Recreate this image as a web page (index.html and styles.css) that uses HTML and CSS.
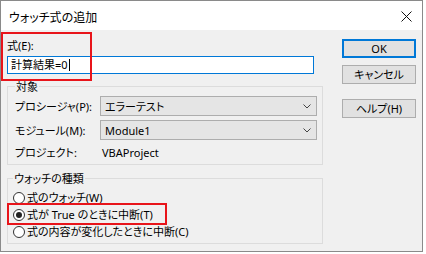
FILE: index.html
```html
<!doctype html>
<html>
<head>
<meta charset="utf-8">
<title>ウォッチ式の追加</title>
<link rel="stylesheet" href="styles.css">
</head>
<body>
<div class="dialog">
	<div class="titlebar">
		<span class="title">ウォッチ式の追加</span>
		<svg class="close" width="11" height="11" viewBox="0 0 11 11"><path d="M0.5 0.5L10.5 10.5M10.5 0.5L0.5 10.5" stroke="#111" stroke-width="1" fill="none"/></svg>
	</div>
	<div class="content">
		<div class="main">
			<div class="label">式(E):</div>
			<div class="input">計算結果=0<span class="caret"></span></div>
			<fieldset class="group target">
				<legend>対象</legend>
				<div class="row">
					<span class="name">プロシージャ(P):</span>
					<div class="select">エラーテスト<svg class="chev" width="8" height="5" viewBox="0 0 8 5"><path d="M0.5 0.5L4 4L7.5 0.5" stroke="#444" fill="none"/></svg></div>
				</div>
				<div class="row">
					<span class="name">モジュール(M):</span>
					<div class="select">Module1<svg class="chev" width="8" height="5" viewBox="0 0 8 5"><path d="M0.5 0.5L4 4L7.5 0.5" stroke="#444" fill="none"/></svg></div>
				</div>
				<div class="row info">
					<span class="name">プロジェクト:</span>
					<span class="value">VBAProject</span>
				</div>
			</fieldset>
			<fieldset class="group kind">
				<legend>ウォッチの種類</legend>
				<div class="radio"><span class="circle"></span>式のウォッチ(W)</div>
				<div class="radio"><span class="circle on"></span>式が True のときに中断(T)</div>
				<div class="radio"><span class="circle"></span>式の内容が変化したときに中断(C)</div>
			</fieldset>
		</div>
		<div class="buttons">
			<div class="btn default">OK</div>
			<div class="btn">キャンセル</div>
			<div class="btn help">ヘルプ(H)</div>
		</div>
	</div>
	<div class="mark mark-expr"></div>
	<div class="mark mark-radio"></div>
</div>
</body>
</html>
```

FILE: styles.css
```css
body {
	margin: 0;
	background: #fff;
	font: 11px/15px "Noto Sans", "Noto Sans CJK JP", sans-serif;
	font-feature-settings: "palt";
	color: #000;
}
.dialog {
	position: relative;
	width: 421px;
	height: 250px;
	border: 1px solid #8a8a8a;
	background: #f0f0f0;
	display: flex;
	flex-direction: column;
}
.titlebar {
	height: 29px;
	background: #fff;
	display: flex;
	align-items: center;
	justify-content: space-between;
	padding: 0 10px 0 8px;
}
.title {
	font-size: 12px;
	margin-top: 3px;
}
.close {
	margin-top: 1px;
}
.content {
	flex: 1;
	display: flex;
	padding: 8px 0 0 6px;
}
.main {
	width: 316px;
}
.label {
	height: 15px;
}
.input {
	margin-top: 3px;
	height: 16px;
	line-height: 16px;
	border: 1px solid #0078d7;
	background: #fff;
	padding-left: 3px;
	width: 302px;
	display: flex;
	align-items: center;
}
.caret {
	display: inline-block;
	width: 1px;
	height: 12px;
	background: #000;
	margin-left: 1px;
}
.group {
	margin: 0;
	border: 1px solid #dcdcdc;
	padding: 0 0 0 7px;
	min-width: 0;
}
.group legend {
	padding: 0 1px;
	line-height: 15px;
}
.target {
	margin-top: 5px;
	padding-top: 2px;
	padding-bottom: 4px;
}
.row {
	display: flex;
	align-items: center;
	height: 20px;
	margin-bottom: 4px;
}
.row.info {
	height: 16px;
	margin-bottom: 0;
}
.name {
	width: 85px;
}
.value {
	padding-left: 2px;
}
.select {
	width: 206px;
	height: 18px;
	border: 1px solid #adadad;
	background: #e5e5e5;
	padding-left: 4px;
	display: flex;
	align-items: center;
	justify-content: space-between;
	padding-right: 5px;
}
.kind {
	margin-top: 6px;
	padding-top: 3px;
	padding-bottom: 3px;
	padding-left: 5px;
}
.radio {
	height: 17px;
	display: flex;
	align-items: center;
}
.circle {
	width: 10px;
	height: 10px;
	border: 1px solid #333;
	border-radius: 50%;
	background: #fff;
	margin-right: 2px;
	display: flex;
	align-items: center;
	justify-content: center;
}
.circle.on::after {
	content: "";
	width: 6px;
	height: 6px;
	border-radius: 50%;
	background: #222;
}
.buttons {
	margin-left: 19px;
	padding-top: 1px;
	width: 74px;
}
.btn {
	height: 17px;
	line-height: 17px;
	border: 1px solid #adadad;
	background: #e1e1e1;
	text-align: center;
	margin-bottom: 7px;
}
.btn.default {
	border: 2px solid #0078d7;
	height: 15px;
	line-height: 15px;
}
.btn.help {
	margin-top: 15px;
}
.mark {
	position: absolute;
	border: 2px solid #e8141a;
}
.mark-expr {
	left: 0;
	top: 31px;
	width: 87px;
	height: 45px;
}
.mark-radio {
	left: 6px;
	top: 202px;
	width: 156px;
	height: 18px;
}
```
